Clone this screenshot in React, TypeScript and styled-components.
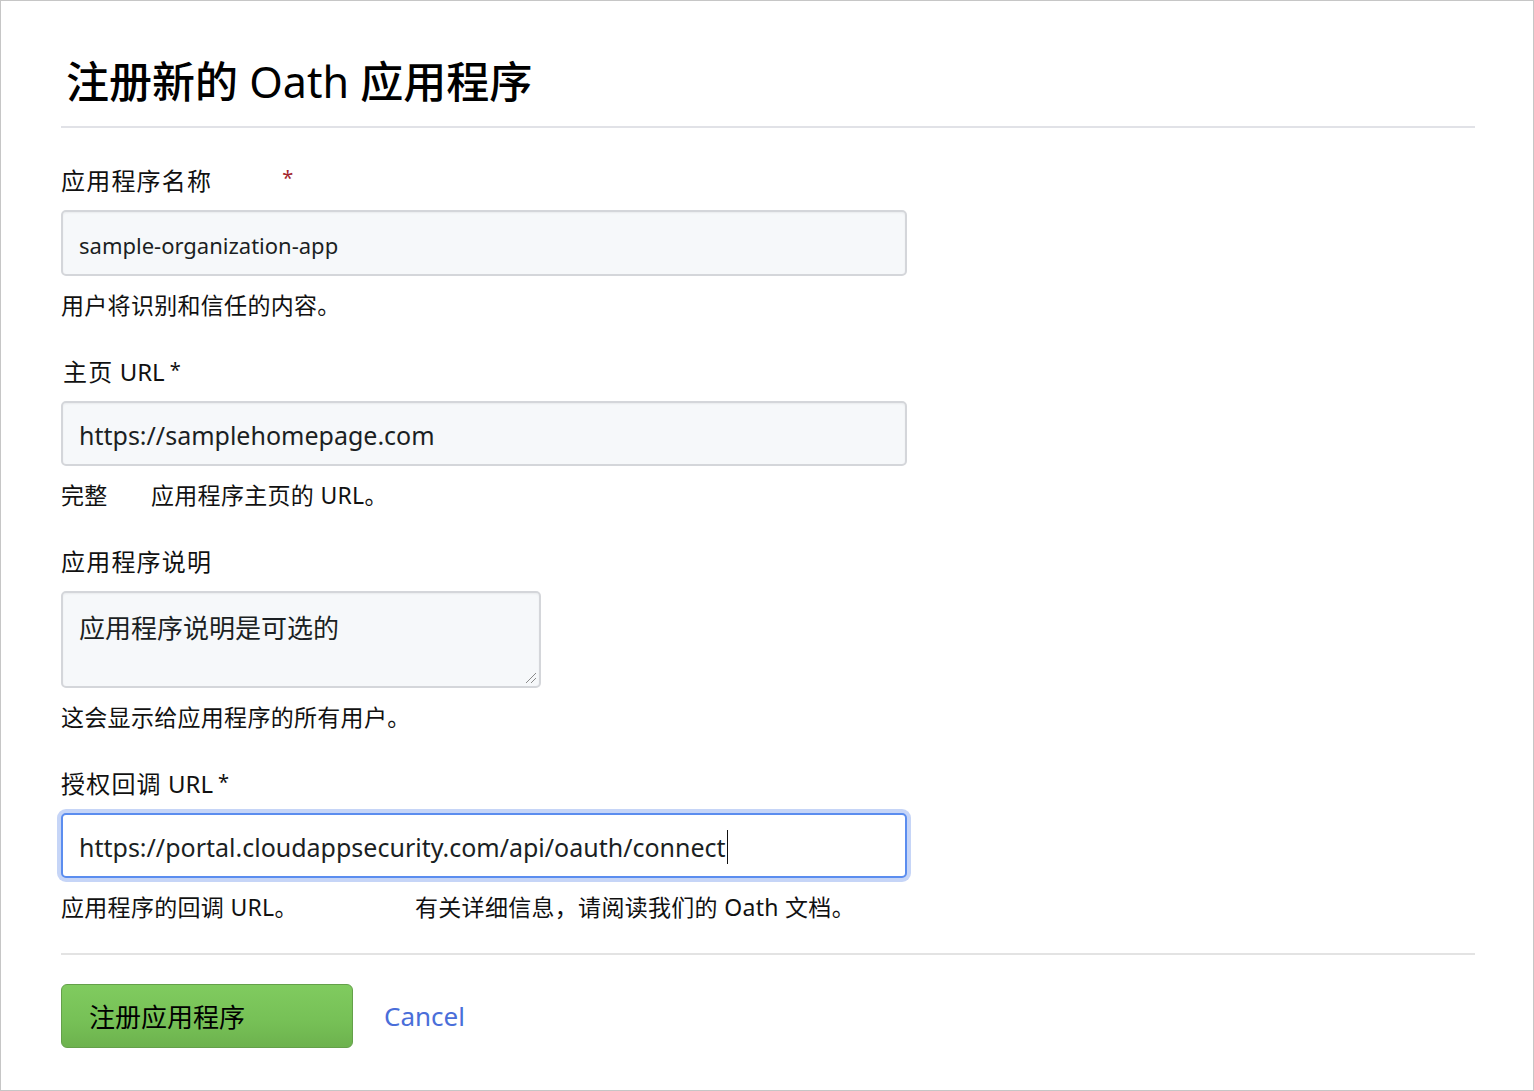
import React from "react";
import styled, { createGlobalStyle } from "styled-components";

const GlobalStyle = createGlobalStyle`
  html, body {
    margin: 0;
    padding: 0;
    background: #ffffff;
  }
  body {
    font-family: "Noto Sans", "Noto Sans CJK SC", sans-serif;
    color: #1b1f23;
  }
`;

const Frame = styled.div`
  box-sizing: border-box;
  width: 1534px;
  height: 1091px;
  border: 1px solid #c6c6c6;
  padding: 0 58px 0 60px;
  background: #ffffff;
`;

const Header = styled.div`
  padding-top: 56px;
  padding-bottom: 20px;
  border-bottom: 2px solid #e1e2e7;
`;

const Title = styled.h1`
  margin: 0 0 0 5px;
  font-size: 43px;
  line-height: 49px;
  font-weight: 500;
  color: #000000;
`;

const TitleLatin = styled.span`
  font-weight: 400;
`;

const Form = styled.div`
  padding-top: 38px;
  display: flex;
  flex-direction: column;
`;

const Field = styled.div`
  display: flex;
  flex-direction: column;
  margin-bottom: 37px;
`;

const Label = styled.label<{ $indent?: number }>`
  display: flex;
  align-items: center;
  font-size: 24px;
  line-height: 30px;
  letter-spacing: 1.2px;
  color: #111111;
  margin-bottom: 14px;
  padding-left: ${(p) => p.$indent ?? 0}px;
`;

const Latin = styled.span`
  letter-spacing: 0;
`;

const Required = styled.span<{ $gap: number; $red?: boolean }>`
  margin-left: ${(p) => p.$gap}px;
  color: ${(p) => (p.$red ? "#a3262d" : "#111111")};
  font-size: 20px;
  position: relative;
  top: ${(p) => (p.$red ? -3 : -2)}px;
`;

const Box = styled.div<{ $width: number; $height: number; $focused?: boolean; $size: number; $top?: boolean }>`
  box-sizing: border-box;
  position: relative;
  width: ${(p) => p.$width}px;
  height: ${(p) => p.$height}px;
  border-radius: 5px;
  background: ${(p) => (p.$focused ? "#ffffff" : "#f6f8fa")};
  border: 2px solid ${(p) => (p.$focused ? "#5b8def" : "#d4d6da")};
  box-shadow: ${(p) => (p.$focused ? "0 0 0 4px #c6d5f7" : "inset 0 1px 2px rgba(27,31,35,0.06)")};
  padding: ${(p) => (p.$top ? "15px 16px" : "3px 16px 0")};
  display: flex;
  align-items: ${(p) => (p.$top ? "flex-start" : "center")};
  font-size: ${(p) => p.$size}px;
  color: #1b1f23;
  white-space: nowrap;
  overflow: hidden;
`;

const Caret = styled.span`
  display: inline-block;
  width: 1px;
  height: 34px;
  background: #111111;
  margin-left: 1px;
`;

const Grip = styled.svg`
  position: absolute;
  right: 2px;
  bottom: 2px;
`;

const Help = styled.div`
  display: flex;
  font-size: 23px;
  line-height: 30px;
  letter-spacing: 0.3px;
  margin-top: 14px;
  color: #111111;
`;

const HelpPart = styled.span<{ $width?: number }>`
  display: inline-block;
  width: ${(p) => (p.$width ? `${p.$width}px` : "auto")};
`;

const Footer = styled.div`
  margin-top: -6px;
  border-top: 2px solid #e3e3e3;
  padding-top: 29px;
  display: flex;
  align-items: center;
  gap: 31px;
`;

const SubmitButton = styled.button`
  box-sizing: border-box;
  width: 292px;
  height: 64px;
  border-radius: 6px;
  border: 1px solid #64a04a;
  background: linear-gradient(180deg, #80cb5f 0%, #76c056 60%, #6db24e 100%);
  padding: 0 0 0 27px;
  text-align: left;
  font-family: "Noto Sans", "Noto Sans CJK SC", sans-serif;
  font-size: 26px;
  color: #000000;
  cursor: pointer;
`;

const CancelLink = styled.a`
  font-size: 26px;
  color: #4a6ed9;
  text-decoration: none;
  cursor: pointer;
`;

export default function App() {
  return (
    <>
      <GlobalStyle />
      <Frame>
        <Header>
          <Title>
            注册新的 <TitleLatin>Oath</TitleLatin> 应用程序
          </Title>
        </Header>
        <Form>
          <Field>
            <Label>
              应用程序名称
              <Required $gap={70} $red>
                *
              </Required>
            </Label>
            <Box $width={846} $height={66} $size={22}>
              sample-organization-app
            </Box>
            <Help>用户将识别和信任的内容。</Help>
          </Field>

          <Field>
            <Label $indent={2}>
              主页 <Latin>&nbsp;URL</Latin>
              <Required $gap={5}>*</Required>
            </Label>
            <Box $width={846} $height={65} $size={25}>
              https://samplehomepage.com
            </Box>
            <Help>
              <HelpPart $width={90}>完整</HelpPart>
              <HelpPart>应用程序主页的 URL。</HelpPart>
            </Help>
          </Field>

          <Field>
            <Label>应用程序说明</Label>
            <Box $width={480} $height={97} $size={26} $top>
              应用程序说明是可选的
              <Grip width="14" height="14" viewBox="0 0 14 14">
                <path d="M13 3 L3 13 M13 8 L8 13" stroke="#8a8a8a" strokeWidth="1" fill="none" />
              </Grip>
            </Box>
            <Help>这会显示给应用程序的所有用户。</Help>
          </Field>

          <Field>
            <Label>
              授权回调 <Latin>&nbsp;URL</Latin>
              <Required $gap={5}>*</Required>
            </Label>
            <Box $width={846} $height={65} $size={25} $focused>
              https://portal.cloudappsecurity.com/api/oauth/connect
              <Caret />
            </Box>
            <Help>
              <HelpPart $width={354}>应用程序的回调 URL。</HelpPart>
              <HelpPart>有关详细信息，请阅读我们的 Oath 文档。</HelpPart>
            </Help>
          </Field>
        </Form>
        <Footer>
          <SubmitButton type="button">注册应用程序</SubmitButton>
          <CancelLink>Cancel</CancelLink>
        </Footer>
      </Frame>
    </>
  );
}
